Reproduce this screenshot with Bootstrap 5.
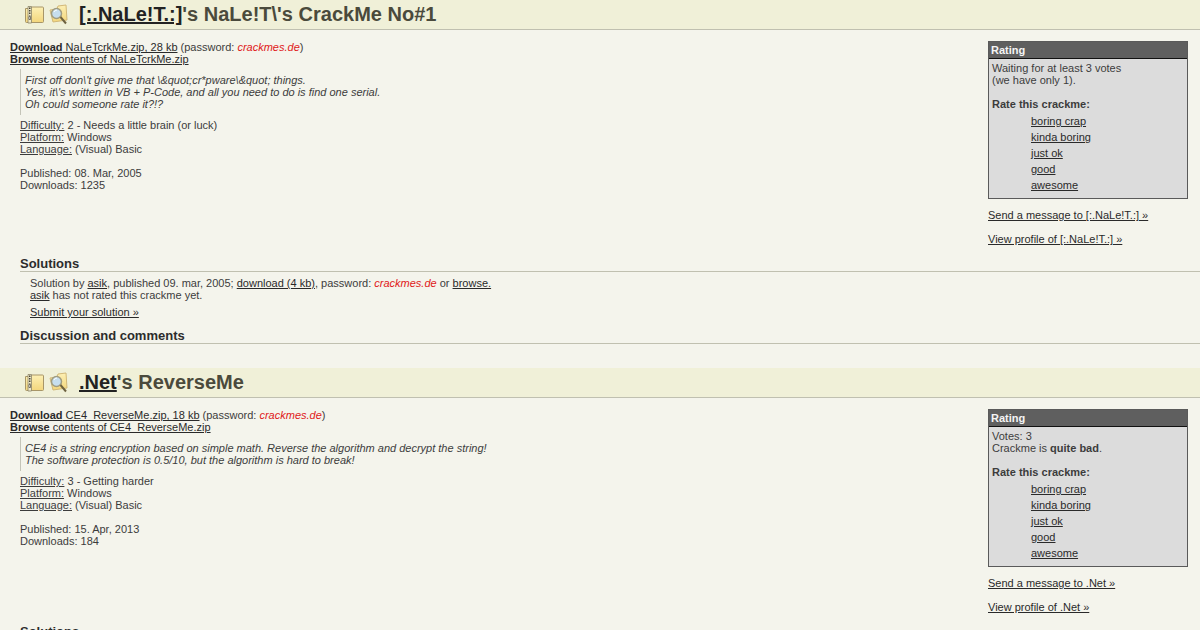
<!DOCTYPE html>
<html lang="en">
<head>
  <meta charset="UTF-8">
  <title>crackmes</title>
  <link href="https://cdn.jsdelivr.net/npm/bootstrap@5.3.3/dist/css/bootstrap.min.css" rel="stylesheet">
  <style>
    body { background: #f4f4ec; color: #3c3c3c; font: 11px/12px "Liberation Sans", Arial, sans-serif; overflow: hidden; }
    a { color: #2a2a2a; }
    .icon-defs { position: absolute; width: 0; height: 0; }
    .crack-head { height: 30px; background: #f0f0d8; border-bottom: 1px solid #c0c0b0; padding-left: 24px; }
    .crack-head svg { display: block; }
    .crack-title { font-size: 20px; line-height: 29px; font-weight: 700; color: #4a4a3c; margin: 0 0 0 11px; }
    .crack-title a { color: #222; }
    .crack-body { padding: 11px 12px 0 10px; height: 226px; }
    .pw { color: #e01818; font-style: italic; }
    .crack-info { margin: 4px 0 0 10px; border-left: 1px solid #c4c4b8; padding: 5px 0 5px 4px; font-style: italic; }
    .crack-meta { margin: 4px 0 0 10px; }
    .crack-meta + .crack-meta { margin-top: 12px; }
    .rate-side { width: 200px; flex: none; }
    .rate-box { background: #dcdcdc; border: 1px solid #5a5a5a; padding-bottom: 5px; }
    .rate-title { background: #5f5f5f; color: #f4f4f4; font-weight: 700; line-height: 16px; border-bottom: 1px solid #111; padding-left: 2px; }
    .rate-text { padding: 3px 3px 0; }
    .rate-label { font-weight: 700; margin-top: 12px; }
    .rate-list { list-style: none; margin: 3px 0 0; padding: 0 0 0 42px; }
    .rate-list li { line-height: 16px; }
    .side-link { margin-top: 12px; }
    .rate-box + .side-link { margin-top: 10px; }
    .sec-head { margin: 0 0 0 20px; font-size: 13px; line-height: 15px; font-weight: 700; color: #2c2c2c; border-bottom: 1px solid #c0c0b0; }
    .sec-text { margin: 5px 0 0 30px; }
    .sec-sub { margin: 5px 0 0 30px; }
    .sec-next { margin-top: 10px; }
    .crack-item { height: 368px; }
  </style>
</head>
<body>

  <svg class="icon-defs">
    <defs>
      <linearGradient id="folderFill" x1="0" y1="0" x2="0" y2="1">
        <stop offset="0" stop-color="#fdf0b4"/>
        <stop offset="1" stop-color="#f3d67c"/>
      </linearGradient>
      <symbol id="iconZip" viewBox="0 0 21 19">
        <path d="M1.500 3.500h5l1-1.500h11a1 1 0 0 1 1 1v13.500a1 1 0 0 1-1 1h-16a1 1 0 0 1-1-1z" fill="url(#folderFill)" stroke="#a89668"/>
        <path d="M4 1.500h3.500v16.500h-3.500z" fill="#eee8c8" stroke="#8a8468" stroke-width=".8"/>
        <path d="M5.750 2.500v8" stroke="#4a4636" stroke-width="1.500" stroke-dasharray="1.500 1"/>
        <path d="M5 11.500h1.500v3h-1.500z" fill="#fff" stroke="#4a4636" stroke-width=".7"/>
      </symbol>
      <symbol id="iconFind" viewBox="0 0 19 21">
        <path d="M1 6l7-1 1-3 8-1 1 15-14 2z" fill="url(#folderFill)" stroke="#d2b878"/>
        <circle cx="7.500" cy="9.500" r="5" fill="#c6deee" stroke="#a09c80" stroke-width="1.500"/>
        <path d="M5 8a3 3 0 0 1 3-2" fill="none" stroke="#fff"/>
        <path d="M11.500 13l5.500 6.500" stroke="#6e6240" stroke-width="2"/>
      </symbol>
    </defs>
  </svg>

  <div class="crack-item">
    <div class="crack-head d-flex align-items-center">
      <svg width="21" height="19"><use href="#iconZip"/></svg>
      <svg class="ms-1" width="19" height="21"><use href="#iconFind"/></svg>
      <h1 class="crack-title"><a href="#">[:.NaLe!T.:]</a>'s NaLe!T\'s CrackMe No#1</h1>
    </div>
    <div class="crack-body d-flex justify-content-between">
      <div>
        <div><a href="#"><b>Download</b> NaLeTcrkMe.zip, 28 kb</a> (password: <span class="pw">crackmes.de</span>)<br><a href="#"><b>Browse</b> contents of NaLeTcrkMe.zip</a></div>
        <div class="crack-info">First off don\'t give me that \&amp;quot;cr*pware\&amp;quot; things.<br>Yes, it\'s written in VB + P-Code, and all you need to do is find one serial.<br>Oh could someone rate it?!?</div>
        <div class="crack-meta"><u>Difficulty:</u> 2 - Needs a little brain (or luck)<br><u>Platform:</u> Windows<br><u>Language:</u> (Visual) Basic</div>
        <div class="crack-meta">Published: 08. Mar, 2005<br>Downloads: 1235</div>
      </div>
      <div class="rate-side">
        <div class="rate-box">
          <div class="rate-title">Rating</div>
          <div class="rate-text">Waiting for at least 3 votes<br>(we have only 1).
            <div class="rate-label">Rate this crackme:</div>
          </div>
          <ul class="rate-list">
            <li><a href="#">boring crap</a></li>
            <li><a href="#">kinda boring</a></li>
            <li><a href="#">just ok</a></li>
            <li><a href="#">good</a></li>
            <li><a href="#">awesome</a></li>
          </ul>
        </div>
        <div class="side-link"><a href="#">Send a message to [:.NaLe!T.:] »</a></div>
        <div class="side-link"><a href="#">View profile of [:.NaLe!T.:] »</a></div>
      </div>
    </div>
    <h2 class="sec-head">Solutions</h2>
    <div class="sec-text">Solution by <a href="#">asik</a>, published 09. mar, 2005; <a href="#">download (4 kb)</a>, password: <span class="pw">crackmes.de</span> or <a href="#">browse.</a><br><a href="#">asik</a> has not rated this crackme yet.</div>
    <div class="sec-sub"><a href="#">Submit your solution »</a></div>
    <h2 class="sec-head sec-next">Discussion and comments</h2>
  </div>

  <div class="crack-item">
    <div class="crack-head d-flex align-items-center">
      <svg width="21" height="19"><use href="#iconZip"/></svg>
      <svg class="ms-1" width="19" height="21"><use href="#iconFind"/></svg>
      <h1 class="crack-title"><a href="#">.Net</a>'s ReverseMe</h1>
    </div>
    <div class="crack-body d-flex justify-content-between">
      <div>
        <div><a href="#"><b>Download</b> CE4_ReverseMe.zip, 18 kb</a> (password: <span class="pw">crackmes.de</span>)<br><a href="#"><b>Browse</b> contents of CE4_ReverseMe.zip</a></div>
        <div class="crack-info">CE4 is a string encryption based on simple math. Reverse the algorithm and decrypt the string!<br>The software protection is 0.5/10, but the algorithm is hard to break!</div>
        <div class="crack-meta"><u>Difficulty:</u> 3 - Getting harder<br><u>Platform:</u> Windows<br><u>Language:</u> (Visual) Basic</div>
        <div class="crack-meta">Published: 15. Apr, 2013<br>Downloads: 184</div>
      </div>
      <div class="rate-side">
        <div class="rate-box">
          <div class="rate-title">Rating</div>
          <div class="rate-text">Votes: 3<br>Crackme is <b>quite bad</b>.
            <div class="rate-label">Rate this crackme:</div>
          </div>
          <ul class="rate-list">
            <li><a href="#">boring crap</a></li>
            <li><a href="#">kinda boring</a></li>
            <li><a href="#">just ok</a></li>
            <li><a href="#">good</a></li>
            <li><a href="#">awesome</a></li>
          </ul>
        </div>
        <div class="side-link"><a href="#">Send a message to .Net »</a></div>
        <div class="side-link"><a href="#">View profile of .Net »</a></div>
      </div>
    </div>
    <h2 class="sec-head">Solutions</h2>
  </div>

  <script src="https://cdn.jsdelivr.net/npm/bootstrap@5.3.3/dist/js/bootstrap.bundle.min.js"></script>
</body>
</html>
